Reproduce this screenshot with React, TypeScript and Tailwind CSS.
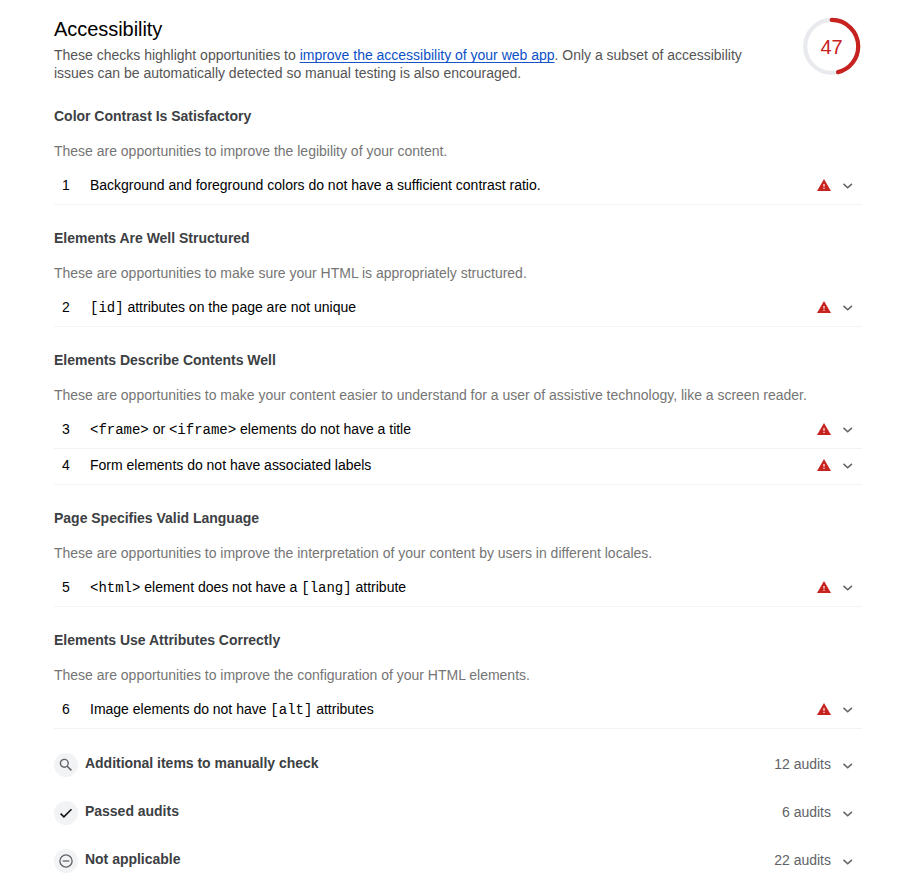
import React from "react";

type Audit = { n: number; title: React.ReactNode };
type Group = { title: string; description: string; audits: Audit[] };

const Code = ({ children }: { children: React.ReactNode }) => (
  <code className="font-['Liberation_Mono',monospace] text-[14px] leading-none">{children}</code>
);

const groups: Group[] = [
  {
    title: "Color Contrast Is Satisfactory",
    description: "These are opportunities to improve the legibility of your content.",
    audits: [{ n: 1, title: "Background and foreground colors do not have a sufficient contrast ratio." }],
  },
  {
    title: "Elements Are Well Structured",
    description: "These are opportunities to make sure your HTML is appropriately structured.",
    audits: [{ n: 2, title: <><Code>[id]</Code> attributes on the page are not unique</> }],
  },
  {
    title: "Elements Describe Contents Well",
    description:
      "These are opportunities to make your content easier to understand for a user of assistive technology, like a screen reader.",
    audits: [
      { n: 3, title: <><Code>{"<frame>"}</Code> or <Code>{"<iframe>"}</Code> elements do not have a title</> },
      { n: 4, title: "Form elements do not have associated labels" },
    ],
  },
  {
    title: "Page Specifies Valid Language",
    description: "These are opportunities to improve the interpretation of your content by users in different locales.",
    audits: [{ n: 5, title: <><Code>{"<html>"}</Code> element does not have a <Code>[lang]</Code> attribute</> }],
  },
  {
    title: "Elements Use Attributes Correctly",
    description: "These are opportunities to improve the configuration of your HTML elements.",
    audits: [{ n: 6, title: <>Image elements do not have <Code>[alt]</Code> attributes</> }],
  },
];

const Chevron = () => (
  <svg width="10" height="6" viewBox="0 0 10 6" fill="none" stroke="#5f6368" strokeWidth="1.5">
    <path d="M0.5 0.9 4.7 4.8 8.9 0.9" />
  </svg>
);

const Warning = () => (
  <svg width="14" height="12" viewBox="0 0 14 12">
    <path d="M7 0 14 12H0z" fill="#c7221f" />
    <path d="M6.3 4.9h1.4v2.9H6.3zM6.3 8.7h1.4V10H6.3z" fill="#fff" fillOpacity="0.8" />
  </svg>
);

const Gauge = () => (
  <div className="grid h-[58px] w-[58px] place-items-center">
    <svg width="58" height="58" viewBox="0 0 58 58" fill="none" className="col-start-1 row-start-1">
      <circle cx="28.7" cy="29.4" r="26.5" stroke="#e8eaed" strokeWidth="4.2" />
      <circle
        cx="28.7"
        cy="29.4"
        r="26.5"
        stroke="#c7221f"
        strokeWidth="4.2"
        strokeLinecap="round"
        strokeDasharray="76.2 200"
        transform="rotate(-90 28.7 29.4)"
      />
    </svg>
    <span className="col-start-1 row-start-1 mr-[1px] pt-[2px] text-[20px] leading-6 text-[#c7221f]">47</span>
  </div>
);

const SearchIcon = () => (
  <svg width="24" height="24" viewBox="0 0 24 24" fill="none" stroke="#5f6368" strokeWidth="1.4">
    <circle cx="10.3" cy="10.3" r="3.9" />
    <path d="m13.2 13.2 4.2 4.2" strokeWidth="1.6" />
  </svg>
);

const CheckIcon = () => (
  <svg width="24" height="24" viewBox="0 0 24 24" fill="none" stroke="#111" strokeWidth="1.5">
    <path d="m6.6 12.6 3.3 3.3 7.6-7.7" />
  </svg>
);

const MinusIcon = () => (
  <svg width="24" height="24" viewBox="0 0 24 24" fill="none" stroke="#5f6368" strokeWidth="1.3">
    <circle cx="12" cy="12" r="6.1" />
    <path d="M8.7 12h6.6" />
  </svg>
);

const clumps = [
  { icon: <SearchIcon />, title: "Additional items to manually check", count: "12 audits" },
  { icon: <CheckIcon />, title: "Passed audits", count: "6 audits" },
  { icon: <MinusIcon />, title: "Not applicable", count: "22 audits" },
];

export default function App() {
  return (
    <main className="h-[893px] w-[917px] overflow-hidden bg-white pl-[54px] pr-[55px] pt-[17px] font-['Liberation_Sans',Arial,sans-serif] text-[14px] leading-[18px] text-black">
      <header className="flex h-[66px] justify-between">
        <div className="w-[720px]">
          <h1 className="text-[20px] leading-6 tracking-[-0.05px]">Accessibility</h1>
          <p className="mt-[5px] tracking-[-0.008px] text-[#555]">
            These checks highlight opportunities to{" "}
            <a className="text-[#0c50c7] underline decoration-[#1a55c8] decoration-1 underline-offset-2 [text-decoration-skip-ink:none]">
              improve the accessibility of your web app
            </a>
            . Only a subset of accessibility issues can be automatically detected so manual testing is also encouraged.
          </p>
        </div>
        <div className="mr-px">
          <Gauge />
        </div>
      </header>

      {groups.map((g) => (
        <section key={g.title} className="pt-6">
          <h2 className="font-bold tracking-[-0.015px] text-[#3c4043]">{g.title}</h2>
          <p className="mb-[9px] mt-[17px] whitespace-nowrap tracking-[-0.008px] text-[#757575]">{g.description}</p>
          {g.audits.map((a) => (
            <div key={a.n} className="flex h-9 items-center border-b border-[#f1f3f4] pr-[9px]">
              <span className="w-9 pb-[3px] pl-2">{a.n}</span>
              <span className="flex-1 pb-[3px] tracking-[-0.008px]">{a.title}</span>
              <span className="mr-3 pb-[3px]">
                <Warning />
              </span>
              <span className="pb-[1px]">
                <Chevron />
              </span>
            </div>
          ))}
        </section>
      ))}

      <section className="mt-6 flex flex-col gap-6">
        {clumps.map((c) => (
          <div key={c.title} className="flex h-6 items-center pr-[9px]">
            <span className="h-6 w-6 rounded-full bg-[#f1f3f4]">{c.icon}</span>
            <span className="ml-[7px] flex-1 pb-1 font-bold tracking-[-0.02px] text-[#3c4043]">{c.title}</span>
            <span className="mr-3 pb-[2px] text-[#5f6368]">{c.count}</span>
            <span className="pt-[1px]">
              <Chevron />
            </span>
          </div>
        ))}
      </section>
    </main>
  );
}
